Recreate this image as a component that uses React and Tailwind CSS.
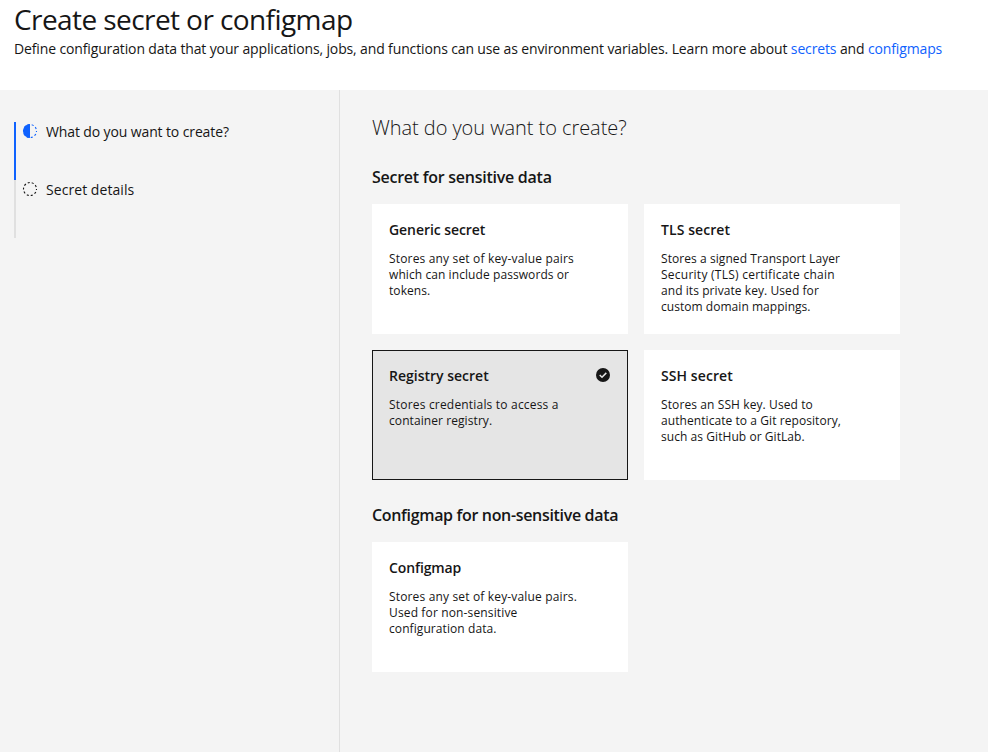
import React from "react";

const secrets = [
  {
    title: "Generic secret",
    tracking: "tracking-[-0.07px]",
    lines: [
      ["Stores any set of key-value pairs", "tracking-[0.165px]"],
      ["which can include passwords or", "tracking-[0.08px]"],
      ["tokens.", "tracking-[0.08px]"],
    ],
  },
  {
    title: "TLS secret",
    tracking: "tracking-[0.08px]",
    lines: [
      ["Stores a signed Transport Layer", "tracking-[0.07px]"],
      ["Security (TLS) certificate chain", "tracking-[0.25px]"],
      ["and its private key. Used for", "tracking-[0.07px]"],
      ["custom domain mappings.", "tracking-[0.04px]"],
    ],
  },
  {
    title: "Registry secret",
    tracking: "tracking-normal",
    lines: [
      ["Stores credentials to access a", "tracking-[0.19px]"],
      ["container registry.", "tracking-[0.08px]"],
    ],
    selected: true,
  },
  {
    title: "SSH secret",
    tracking: "tracking-[0.08px]",
    lines: [
      ["Stores an SSH key. Used to", "tracking-[0.1px]"],
      ["authenticate to a Git repository,", "tracking-[0.07px]"],
      ["such as GitHub or GitLab.", "tracking-[0.06px]"],
    ],
  },
];

const configmaps = [
  {
    title: "Configmap",
    tracking: "tracking-[-0.12px]",
    lines: [
      ["Stores any set of key-value pairs.", "tracking-[0.16px]"],
      ["Used for non-sensitive", "tracking-[0.14px]"],
      ["configuration data.", "tracking-[0.08px]"],
    ],
  },
];

function CheckmarkFilled() {
  return (
    <svg className="h-4 w-4" viewBox="0 0 16 16">
      <circle cx="8" cy="8" r="7" fill="#161616" />
      <path d="M4.7 8 7 10.2 11.3 5.9" fill="none" stroke="#e5e5e5" strokeWidth="1.5" />
    </svg>
  );
}

function StepIcon({ current }) {
  return (
    <svg className="h-4 w-4 shrink-0" viewBox="0 0 16 16">
      <circle
        cx="8"
        cy="8"
        r="6.5"
        fill="none"
        stroke={current ? "#0f62fe" : "#161616"}
        strokeWidth="1.1"
        strokeDasharray="2.04 2.04"
        strokeDashoffset="1.02"
      />
      {current && <path d="M8 1a7 7 0 0 0 0 14z" fill="#0f62fe" />}
    </svg>
  );
}

function Step({ label, current, tracking }) {
  return (
    <li
      className={
        "flex h-[58px] items-start border-l-2 pl-1.5 " +
        (current ? "border-[#0f62fe]" : "border-[#e0e0e0]")
      }
    >
      <div className="mt-[1px] flex">
        <StepIcon current={current} />
      </div>
      <p className={"ml-2 text-[14px] leading-5 whitespace-nowrap " + tracking}>{label}</p>
    </li>
  );
}

function Tile({ title, tracking, lines, selected }) {
  return (
    <button
      className={
        "flex h-[130px] w-64 items-start justify-between border p-4 text-left " +
        (selected ? "border-[#161616] bg-[#e5e5e5]" : "border-white bg-white")
      }
    >
      <div>
        <h4 className={"text-[14px] leading-[18px] font-semibold " + tracking}>{title}</h4>
        <p className="mt-3 text-[12px] leading-4 whitespace-nowrap">
          {lines.map(([text, spacing]) => (
            <span key={text} className={"block " + spacing}>
              {text}
            </span>
          ))}
        </p>
      </div>
      {selected && <CheckmarkFilled />}
    </button>
  );
}

export default function App() {
  return (
    <div className="flex h-[752px] w-[988px] flex-col overflow-hidden bg-white font-['Open_Sans',sans-serif] text-[#161616]">
      <header className="h-[90px] shrink-0 pt-[1px] pl-[14px] whitespace-nowrap">
        <h1 className="text-[28px] leading-9 font-normal tracking-[-0.58px]">Create secret or configmap</h1>
        <p className="mt-[2px] text-[14px] leading-5 tracking-[-0.135px]">
          Define configuration data that your applications, jobs, and functions can use as environment
          variables. Learn more about <a className="text-[#0f62fe]">secrets</a> and{" "}
          <a className="text-[#0f62fe]">configmaps</a>
        </p>
      </header>
      <div className="flex flex-1 bg-[#f4f4f4]">
        <nav className="w-[340px] shrink-0 border-r border-[#e0e0e0] pt-8 pl-[14px]">
          <ul>
            <Step label="What do you want to create?" tracking="tracking-[-0.12px]" current />
            <Step label="Secret details" tracking="tracking-[0.06px]" />
          </ul>
        </nav>
        <main className="pt-6 pl-8">
          <h2 className="text-[20px] leading-7 font-light tracking-[-0.06px]">What do you want to create?</h2>
          <h3 className="mt-[23px] text-[16px] leading-6 font-semibold tracking-[-0.26px]">
            Secret for sensitive data
          </h3>
          <div className="mt-[15px] grid grid-cols-[256px_256px] gap-4">
            {secrets.map((s) => (
              <Tile key={s.title} {...s} />
            ))}
          </div>
          <h3 className="mt-[23px] text-[16px] leading-6 font-semibold tracking-[-0.33px]">
            Configmap for non-sensitive data
          </h3>
          <div className="mt-[15px] grid grid-cols-[256px_256px] gap-4">
            {configmaps.map((s) => (
              <Tile key={s.title} {...s} />
            ))}
          </div>
        </main>
      </div>
    </div>
  );
}
